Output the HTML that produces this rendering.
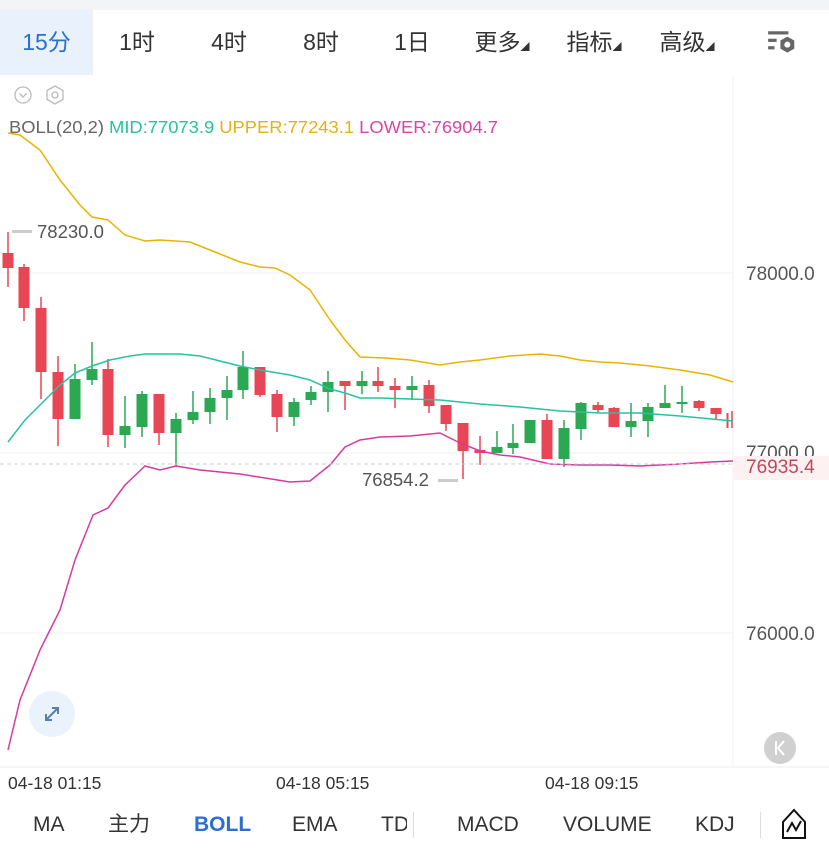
<!DOCTYPE html>
<html><head><meta charset="utf-8"><style>
body{margin:0;width:829px;height:859px;overflow:hidden;background:#fff;font-family:"Liberation Sans","Noto Sans CJK SC",sans-serif;position:relative}
.top{position:absolute;left:0;top:0;width:829px;height:10px;background:#f3f4f6}
.tab{position:absolute;top:10px;height:65px;line-height:65px;font-size:23px;color:#333;text-align:center}
.b{position:absolute;top:810px;font-size:21px;color:#333;line-height:30px}
.t{position:absolute;top:773px;font-size:17.5px;color:#333}
</style></head><body>
<div class="top"></div>
<div class="tab" style="left:0;width:93px;background:#e8f1fc;color:#2b6fd1">15分</div>
<div class="tab" style="left:100px;width:74px">1时</div>
<div class="tab" style="left:192px;width:74px">4时</div>
<div class="tab" style="left:284px;width:74px">8时</div>
<div class="tab" style="left:375px;width:74px">1日</div>
<div class="tab" style="left:462px;width:80px">更多<span style="font-size:9px">◢</span></div>
<div class="tab" style="left:554px;width:80px">指标<span style="font-size:9px">◢</span></div>
<div class="tab" style="left:647px;width:80px">高级<span style="font-size:9px">◢</span></div>
<svg style="position:absolute;left:766px;top:29px" width="32" height="28" viewBox="0 0 30 26"><rect x="2" y="2" width="19" height="3" fill="#666"/><rect x="2" y="9" width="8" height="3" fill="#666"/><rect x="2" y="16" width="6" height="3" fill="#666"/><polygon points="20,7 26.5,10.7 26.5,18.3 20,22 13.5,18.3 13.5,10.7" fill="#666"/><circle cx="20" cy="14.5" r="2.8" fill="#fff"/></svg>
<svg style="position:absolute;left:0;top:75px" width="829" height="700">
<g transform="translate(0,-75)">
<rect x="733" y="75" width="96" height="692" fill="#fff"/>
<line x1="733" y1="75" x2="733" y2="767" stroke="#f0f0f0"/>
<line x1="0" y1="273" x2="733" y2="273" stroke="#f2f2f2"/>
<line x1="0" y1="453" x2="733" y2="453" stroke="#f2f2f2"/>
<line x1="0" y1="633" x2="733" y2="633" stroke="#f2f2f2"/>
<line x1="0" y1="767" x2="829" y2="767" stroke="#eee"/>
<circle cx="23" cy="95" r="8" fill="none" stroke="#bbb" stroke-width="1.3"/><path d="M19.5 93.5 L23 97 L26.5 93.5" fill="none" stroke="#bbb" stroke-width="1.3"/>
<polygon points="55,86 63,90.5 63,99.5 55,104 47,99.5 47,90.5" fill="none" stroke="#bbb" stroke-width="1.3"/><circle cx="55" cy="95" r="3" fill="none" stroke="#bbb" stroke-width="1.3"/>
<text x="9" y="133" font-size="17.5" fill="#666" textLength="489" lengthAdjust="spacingAndGlyphs">BOLL(20,2) <tspan fill="#27c3a0">MID:77073.9</tspan> <tspan fill="#e3b21b">UPPER:77243.1</tspan> <tspan fill="#d846a6">LOWER:76904.7</tspan></text>
<g id="c"></g>
<polyline fill="none" stroke="#e8b400" stroke-width="1.5" points="8,133 20,135 40,150 60,180 80,205 92,217 108,220 125,235 145,241 160,240 190,242 210,250 240,262 260,267 275,268 290,275 310,290 330,320 345,340 360,357 385,358 410,360 440,365 460,362 480,360 510,356 540,354 560,356 580,360 600,362 620,363 650,366 680,370 710,375 733,382"/>
<polyline fill="none" stroke="#27c3a0" stroke-width="1.5" points="8,442 25,420 40,405 60,385 75,373 92,366 110,360 130,356 145,354 160,354 180,354 200,356 220,361 240,366 260,370 290,375 310,380 330,389 345,393 360,398 380,398 410,399 440,400 460,402 480,404 520,407 540,409 560,411 600,413 640,413 680,416 733,421"/>
<polyline fill="none" stroke="#d63aa0" stroke-width="1.5" points="8,750 20,700 40,650 60,610 75,560 93,515 108,508 125,485 145,466 160,470 176,466 200,470 240,474 290,482 310,481 330,465 345,447 360,440 380,437 410,436 440,433 460,443 480,451 500,455 520,457 550,464 580,465 610,465 640,466 680,464 710,462 733,461"/>
<line x1="0" y1="464" x2="733" y2="464" stroke="#ccc" stroke-dasharray="4,3"/>
<text x="746" y="280" font-size="19" fill="#555">78000.0</text>
<text x="746" y="459" font-size="19" fill="#555">77000.0</text>
<rect x="733" y="456" width="96" height="24" fill="#fdf1f2"/>
<text x="746" y="473" font-size="19" fill="#c0485b">76935.4</text>
<text x="746" y="640" font-size="19" fill="#555">76000.0</text>
<rect x="12" y="230" width="20" height="3" fill="#ccc"/>
<text x="37" y="238" font-size="18.5" fill="#555">78230.0</text>
<text x="362" y="486" font-size="18.5" fill="#555">76854.2</text>
<rect x="438" y="479" width="20" height="3" fill="#ccc"/>
<circle cx="52" cy="714" r="23" fill="#eaf3fc"/>
<path d="M46 720 L58 708 M52 708 L58 708 L58 714 M46 714 L46 720 L52 720" fill="none" stroke="#5a7fa8" stroke-width="2"/>
<circle cx="780" cy="748" r="16" fill="#d0d0d0"/>
<path d="M776 741 V755 M784 741 L778 748 L784 755" fill="none" stroke="#fff" stroke-width="2"/>
</g></svg>
<div class="t" style="left:8px">04-18 01:15</div>
<div class="t" style="left:276px">04-18 05:15</div>
<div class="t" style="left:545px">04-18 09:15</div>
<div class="b" style="left:33px">MA</div>
<div class="b" style="left:108px">主力</div>
<div class="b" style="left:194px;color:#2b6fd1;font-weight:bold">BOLL</div>
<div class="b" style="left:292px">EMA</div>
<div class="b" style="left:381px;width:26px;overflow:hidden">TD</div>
<div style="position:absolute;left:413px;top:812px;width:1px;height:26px;background:#ddd"></div>
<div class="b" style="left:457px">MACD</div>
<div class="b" style="left:563px">VOLUME</div>
<div class="b" style="left:695px">KDJ</div>
<div style="position:absolute;left:760px;top:812px;width:1px;height:26px;background:#ddd"></div>
<svg style="position:absolute;left:780px;top:808px" width="28" height="34" viewBox="0 0 28 34"><path d="M14 2 L25 14 V30 H3 V14 Z" fill="none" stroke="#111" stroke-width="2"/><path d="M7 24 L12 15 L16 22 L21 13" fill="none" stroke="#111" stroke-width="2"/></svg>
<script>
var d=[[8,253,268,232,287,0],[24,267,308,264,321,0],[41,308,372,297,399,0],[58,372,419,356,446,0],[75,379,419,364,419,1],[92,369,380,342,385,1],[108,369,435,359,447,0],[125,426,435,396,448,1],[142,394,427,391,437,1],[159,394,433,394,445,0],[176,419,433,413,466,1],[193,412,420,391,424,1],[210,398,412,388,424,1],[227,390,398,376,420,1],[243,367,390,351,399,1],[260,367,395,367,397,0],[277,394,417,390,432,0],[294,402,417,398,426,1],[311,392,400,386,405,1],[328,382,392,371,412,1],[345,381,386,381,410,0],[362,381,386,371,394,1],[378,381,386,367,392,0],[395,386,390,378,408,0],[412,386,390,376,400,1],[429,385,406,380,413,0],[446,405,424,405,431,0],[463,423,451,423,479,0],[480,450,453,436,465,0],[497,447,453,431,453,1],[513,443,448,424,454,1],[530,420,443,420,443,1],[547,420,459,414,459,0],[564,428,459,420,467,1],[581,403,429,402,440,1],[598,405,410,402,413,0],[614,408,427,407,427,0],[631,421,427,403,437,1],[648,407,421,403,437,1],[665,403,408,385,408,1],[682,402,404,386,413,1],[699,401,408,400,411,0],[716,408,414,408,420,0],[732,413,428,411,428,0]];
var s='';d.forEach(function(c){var col=c[5]?'#2aa852':'#e84555';var x=c[0];s+='<line x1="'+x+'" y1="'+c[3]+'" x2="'+x+'" y2="'+c[4]+'" stroke="'+col+'" stroke-width="1.5"/>';var w=x==732?2:11;s+='<rect x="'+(x-5.5)+'" y="'+c[1]+'" width="'+w+'" height="'+Math.max(2,c[2]-c[1])+'" fill="'+col+'"/>';});
document.getElementById('c').innerHTML=s;
</script>
</body></html>
